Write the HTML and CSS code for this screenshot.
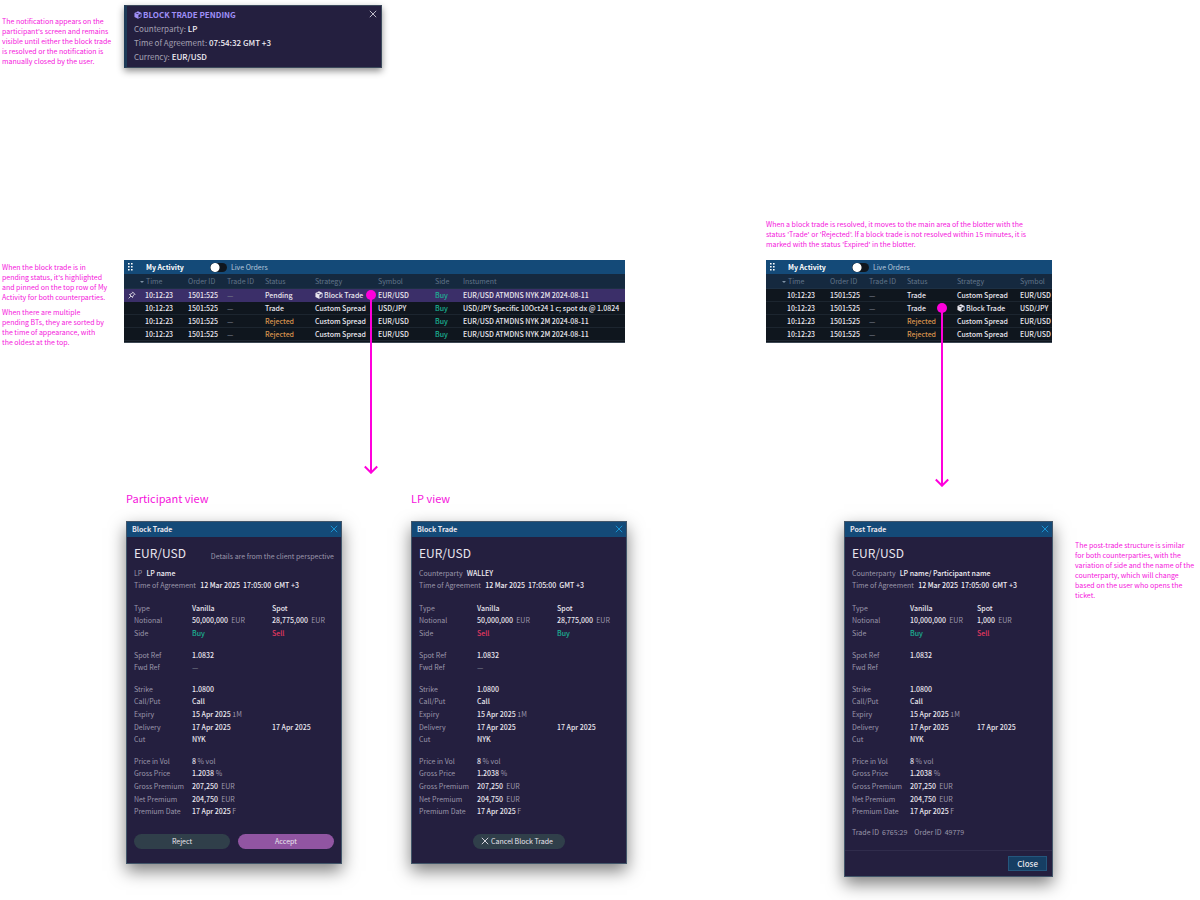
FILE: index.html
```html
<!DOCTYPE html>
<html lang="en">
<head>
<meta charset="utf-8">
<title>Block trade flow</title>
<link rel="stylesheet" href="styles.css">
</head>
<body>
<svg class="defs" aria-hidden="true">
  <symbol id="cube" viewBox="0 0 14 14"><path fill="currentColor" fill-rule="evenodd" d="M7 .4 13.2 3.3V10.5L7 13.7.8 10.5V3.3ZM7.8 6.9V11.8L11.8 9.7V5ZM2.6 3.6 7 5.7 8.6 5 4.2 2.9Z"/></symbol>
  <symbol id="cross" viewBox="0 0 10 10"><path d="M1 1 9 9M9 1 1 9" fill="none" stroke="currentColor" stroke-width="1.1"/></symbol>
  <symbol id="grip" viewBox="0 0 5 8"><path fill="currentColor" d="M0 0h1.6v1.6H0zM3 0h1.6v1.6H3zM0 3h1.6v1.6H0zM3 3h1.6v1.6H3zM0 6h1.6v1.6H0zM3 6h1.6v1.6H3z"/></symbol>
  <symbol id="pin" viewBox="0 0 12 12"><path d="M6.6 1.2 10.8 5.4M7.3 1.9 4.8 4.6 2.2 5.2 6.8 9.8 7.4 7.2 10.1 4.7M4.4 7.6 1 11" fill="none" stroke="currentColor" stroke-width="1.3"/></symbol>
  <symbol id="arrow" viewBox="0 0 14 184"><circle cx="7" cy="5" r="5" fill="currentColor"/><path d="M7 5V182M.8 176.5 7 182.7 13.2 176.5" fill="none" stroke="currentColor" stroke-width="2"/></symbol>
</svg>
<main class="board">
  <p class="note note-alert">The notification appears on the<br>participant's screen and remains<br>visible until either the block trade<br>is resolved or the notification is<br>manually closed by the user.</p>
  <section class="alert">
    <div>
      <h2 class="alert-title"><svg class="icon"><use href="#cube"/></svg>BLOCK TRADE PENDING</h2>
      <p>Counterparty: <b>LP</b></p>
      <p>Time of Agreement: <b>07:54:32 GMT +3</b></p>
      <p>Currency: <b>EUR/USD</b></p>
    </div>
    <button class="close" aria-label="Close notification"><svg class="icon-cross"><use href="#cross"/></svg></button>
  </section>

  <div class="note note-pending">
    <p>When the block trade is in<br>pending status, it's highlighted<br>and pinned on the top row of My<br>Activity for both counterparties.</p>
    <p>When there are multiple<br>pending BTs, they are sorted by<br>the time of appearance, with<br>the oldest at the top.</p>
  </div>

  <section class="activity activity-wide">
    <header class="activity-bar">
      <svg class="grip"><use href="#grip"/></svg>
      <h2>My Activity</h2>
      <label class="switch"><input type="checkbox">Live Orders</label>
    </header>
    <table class="blotter">
      <colgroup><col class="c-pin"><col class="c-time"><col class="c-order"><col class="c-trade"><col class="c-status"><col class="c-strategy"><col class="c-symbol"><col class="c-side"><col></colgroup>
      <thead><tr><th></th><th><i class="sort"></i>Time</th><th>Order ID</th><th>Trade ID</th><th>Status</th><th>Strategy</th><th>Symbol</th><th>Side</th><th>Instument</th></tr></thead>
      <tbody>
        <tr class="pinned"><td><svg class="pin"><use href="#pin"/></svg></td><td>10:12:23</td><td>1501:525</td><td class="dim">—</td><td>Pending</td><td class="anchor"><svg class="icon"><use href="#cube"/></svg>Block Trade<svg class="connector on-strategy"><use href="#arrow"/></svg></td><td>EUR/USD</td><td class="buy">Buy</td><td class="clip">EUR/USD ATMDNS NYK 2M 2024-08-11</td></tr>
        <tr><td></td><td>10:12:23</td><td>1501:525</td><td class="dim">—</td><td>Trade</td><td>Custom Spread</td><td>USD/JPY</td><td class="buy">Buy</td><td class="clip">USD/JPY Specific 10Oct24 1 c; spot dx @ 1.0824</td></tr>
        <tr><td></td><td>10:12:23</td><td>1501:525</td><td class="dim">—</td><td class="rejected">Rejected</td><td>Custom Spread</td><td>EUR/USD</td><td class="buy">Buy</td><td class="clip">EUR/USD ATMDNS NYK 2M 2024-08-11</td></tr>
        <tr><td></td><td>10:12:23</td><td>1501:525</td><td class="dim">—</td><td class="rejected">Rejected</td><td>Custom Spread</td><td>EUR/USD</td><td class="buy">Buy</td><td class="clip">EUR/USD ATMDNS NYK 2M 2024-08-11</td></tr>
      </tbody>
    </table>
  </section>

  <div class="resolved">
    <p class="note">When a block trade is resolved, it moves to the main area of the blotter with the<br>status 'Trade' or 'Rejected'. If a block trade is not resolved within 15 minutes, it is<br>marked with the status 'Expired' in the blotter.</p>
    <section class="activity activity-narrow">
      <header class="activity-bar">
        <svg class="grip"><use href="#grip"/></svg>
        <h2>My Activity</h2>
        <label class="switch"><input type="checkbox">Live Orders</label>
      </header>
      <table class="blotter">
        <colgroup><col class="c-pin"><col class="c-time"><col class="c-order"><col class="c-trade"><col class="c-status"><col class="c-strategy"><col></colgroup>
        <thead><tr><th></th><th><i class="sort"></i>Time</th><th>Order ID</th><th>Trade ID</th><th>Status</th><th>Strategy</th><th>Symbol</th></tr></thead>
        <tbody>
          <tr><td></td><td>10:12:23</td><td>1501:525</td><td class="dim">—</td><td>Trade</td><td>Custom Spread</td><td class="clip">EUR/USD</td></tr>
          <tr><td></td><td>10:12:23</td><td>1501:525</td><td class="dim">—</td><td class="anchor">Trade<svg class="connector on-status"><use href="#arrow"/></svg></td><td><svg class="icon"><use href="#cube"/></svg>Block Trade</td><td class="clip">USD/JPY</td></tr>
          <tr><td></td><td>10:12:23</td><td>1501:525</td><td class="dim">—</td><td class="rejected">Rejected</td><td>Custom Spread</td><td class="clip">EUR/USD</td></tr>
          <tr><td></td><td>10:12:23</td><td>1501:525</td><td class="dim">—</td><td class="rejected">Rejected</td><td>Custom Spread</td><td class="clip">EUR/USD</td></tr>
        </tbody>
      </table>
    </section>
  </div>

  <div class="views">
    <section class="view">
      <h2 class="view-name">Participant view</h2>
      <article class="ticket">
        <header class="ticket-bar"><h3>Block Trade</h3><button class="close" aria-label="Close"><svg class="icon-cross"><use href="#cross"/></svg></button></header>
        <div class="ticket-body">
          <div class="pair-row"><h4>EUR/USD</h4><span>Details are from the client perspective</span></div>
          <p>LP &nbsp;<b>LP name</b></p>
          <p>Time of Agreement &nbsp;<b>12 Mar 2025 &nbsp;17:05:00 &nbsp;GMT +3</b></p>
          <div class="groups">
            <table class="fields rows-3">
              <tr><th>Type</th><td>Vanilla</td><td>Spot</td></tr>
              <tr><th>Notional</th><td>50,000,000 <i>&nbsp;EUR</i></td><td>28,775,000 <i>&nbsp;EUR</i></td></tr>
              <tr><th>Side</th><td class="buy">Buy</td><td class="sell">Sell</td></tr>
            </table>
            <table class="fields rows-2">
              <tr><th>Spot Ref</th><td>1.0832</td><td></td></tr>
              <tr><th>Fwd Ref</th><td class="dim">—</td><td></td></tr>
            </table>
            <table class="fields rows-5">
              <tr><th>Strike</th><td>1.0800</td><td></td></tr>
              <tr><th>Call/Put</th><td>Call</td><td></td></tr>
              <tr><th>Expiry</th><td>15 Apr 2025 <i>1M</i></td><td></td></tr>
              <tr><th>Delivery</th><td>17 Apr 2025</td><td>17 Apr 2025</td></tr>
              <tr><th>Cut</th><td>NYK</td><td></td></tr>
            </table>
            <table class="fields rows-5">
              <tr><th>Price in Vol</th><td>8 <i>% vol</i></td><td></td></tr>
              <tr><th>Gross Price</th><td>1.2038 <i>%</i></td><td></td></tr>
              <tr><th>Gross Premium</th><td>207,250 <i>&nbsp;EUR</i></td><td></td></tr>
              <tr><th>Net Premium</th><td>204,750 <i>&nbsp;EUR</i></td><td></td></tr>
              <tr><th>Premium Date</th><td>17 Apr 2025 <i>F</i></td><td></td></tr>
            </table>
          </div>
          <div class="actions"><button class="pill wide">Reject</button><button class="pill wide accept">Accept</button></div>
        </div>
      </article>
    </section>

    <section class="view">
      <h2 class="view-name">LP view</h2>
      <article class="ticket">
        <header class="ticket-bar"><h3>Block Trade</h3><button class="close" aria-label="Close"><svg class="icon-cross"><use href="#cross"/></svg></button></header>
        <div class="ticket-body">
          <div class="pair-row"><h4>EUR/USD</h4></div>
          <p>Counterparty &nbsp;<b>WALLEY</b></p>
          <p>Time of Agreement &nbsp;<b>12 Mar 2025 &nbsp;17:05:00 &nbsp;GMT +3</b></p>
          <div class="groups">
            <table class="fields rows-3">
              <tr><th>Type</th><td>Vanilla</td><td>Spot</td></tr>
              <tr><th>Notional</th><td>50,000,000 <i>&nbsp;EUR</i></td><td>28,775,000 <i>&nbsp;EUR</i></td></tr>
              <tr><th>Side</th><td class="sell">Sell</td><td class="buy">Buy</td></tr>
            </table>
            <table class="fields rows-2">
              <tr><th>Spot Ref</th><td>1.0832</td><td></td></tr>
              <tr><th>Fwd Ref</th><td class="dim">—</td><td></td></tr>
            </table>
            <table class="fields rows-5">
              <tr><th>Strike</th><td>1.0800</td><td></td></tr>
              <tr><th>Call/Put</th><td>Call</td><td></td></tr>
              <tr><th>Expiry</th><td>15 Apr 2025 <i>1M</i></td><td></td></tr>
              <tr><th>Delivery</th><td>17 Apr 2025</td><td>17 Apr 2025</td></tr>
              <tr><th>Cut</th><td>NYK</td><td></td></tr>
            </table>
            <table class="fields rows-5">
              <tr><th>Price in Vol</th><td>8 <i>% vol</i></td><td></td></tr>
              <tr><th>Gross Price</th><td>1.2038 <i>%</i></td><td></td></tr>
              <tr><th>Gross Premium</th><td>207,250 <i>&nbsp;EUR</i></td><td></td></tr>
              <tr><th>Net Premium</th><td>204,750 <i>&nbsp;EUR</i></td><td></td></tr>
              <tr><th>Premium Date</th><td>17 Apr 2025 <i>F</i></td><td></td></tr>
            </table>
          </div>
          <div class="actions"><button class="pill"><svg class="icon-cross"><use href="#cross"/></svg>Cancel Block Trade</button></div>
        </div>
      </article>
    </section>
  </div>

  <div class="post">
    <article class="ticket post-ticket">
      <header class="ticket-bar"><h3>Post Trade</h3><button class="close" aria-label="Close"><svg class="icon-cross"><use href="#cross"/></svg></button></header>
      <div class="ticket-body">
        <div class="pair-row"><h4>EUR/USD</h4></div>
        <p>Counterparty &nbsp;<b>LP name/ Participant name</b></p>
        <p>Time of Agreement &nbsp;<b>12 Mar 2025 &nbsp;17:05:00 &nbsp;GMT +3</b></p>
        <div class="groups">
          <table class="fields rows-3">
            <tr><th>Type</th><td>Vanilla</td><td>Spot</td></tr>
            <tr><th>Notional</th><td>10,000,000 <i>&nbsp;EUR</i></td><td>1,000 <i>&nbsp;EUR</i></td></tr>
            <tr><th>Side</th><td class="buy">Buy</td><td class="sell">Sell</td></tr>
          </table>
          <table class="fields rows-2">
            <tr><th>Spot Ref</th><td>1.0832</td><td></td></tr>
            <tr><th>Fwd Ref</th><td></td><td></td></tr>
          </table>
          <table class="fields rows-5">
            <tr><th>Strike</th><td>1.0800</td><td></td></tr>
            <tr><th>Call/Put</th><td>Call</td><td></td></tr>
            <tr><th>Expiry</th><td>15 Apr 2025 <i>1M</i></td><td></td></tr>
            <tr><th>Delivery</th><td>17 Apr 2025</td><td>17 Apr 2025</td></tr>
            <tr><th>Cut</th><td>NYK</td><td></td></tr>
          </table>
          <table class="fields rows-5">
            <tr><th>Price in Vol</th><td>8 <i>% vol</i></td><td></td></tr>
            <tr><th>Gross Price</th><td>1.2038 <i>%</i></td><td></td></tr>
            <tr><th>Gross Premium</th><td>207,250 <i>&nbsp;EUR</i></td><td></td></tr>
            <tr><th>Net Premium</th><td>204,750 <i>&nbsp;EUR</i></td><td></td></tr>
            <tr><th>Premium Date</th><td>17 Apr 2025 <i>F</i></td><td></td></tr>
          </table>
        </div>
        <p class="ids"><span>Trade ID &nbsp;6765:29</span><span>Order ID &nbsp;49779</span></p>
      </div>
      <footer class="ticket-foot"><button class="close-ticket">Close</button></footer>
    </article>
    <p class="note note-post">The post-trade structure is similar<br>for both counterparties, with the<br>variation of side and the name of the<br>counterparty, which will change<br>based on the user who opens the<br>ticket.</p>
  </div>
</main>
</body>
</html>
```

FILE: styles.css
```css
* { box-sizing: border-box; }
body { margin: 0; background: #fff; color: #e9e6ee; font: 500 7px/12px "Noto Sans CJK SC", "Noto Sans", sans-serif; }
h2, h3, h4, p { margin: 0; font-size: inherit; }
b { font-weight: 500; color: #f1eef4; }
i { font-style: normal; }
button { font: inherit; color: inherit; padding: 0; border: 0; background: none; }
svg { display: block; flex: none; }
.defs { display: none; }
.icon { display: inline-block; width: 8px; height: 8px; margin-right: 1px; vertical-align: -1px; }
.icon-cross { width: 8px; height: 8px; }
.close { display: flex; color: #199ddf; }

.board { display: grid; grid-template-columns: 122px minmax(0, 642fr) minmax(0, 434fr); grid-template-rows: 214px auto auto; padding: 5px 0 24px 2px; }
.note { color: #f514dc; font-weight: 400; line-height: 10px; white-space: nowrap; }
.note-alert { padding-top: 11px; }

.alert { grid-column: 2 / 4; justify-self: start; align-self: start; width: 258px; display: flex; justify-content: space-between; padding: 2px 4px 3px 7px; background: #241f3f; border: 1px solid #3c4a5c; border-left: 3px solid #1d3b58; box-shadow: 0 3px 7px rgba(0, 0, 0, .45); font-size: 8px; line-height: 14px; color: #a5a1b3; font-weight: 400; }
.alert-title { color: #9f8ff8; font-weight: 700; }
.alert .close { align-self: start; padding-top: 2px; color: #d5d2dc; }

.note-pending { grid-column: 1; align-self: end; display: grid; gap: 5px; }
.activity { background: #0f161e; border-bottom: 1px solid #3d4854; padding-bottom: 1px; align-self: end; }
.activity-wide { width: 78%; margin-bottom: 4px; }
.activity-narrow { width: 66%; }
.resolved { display: grid; gap: 11px; align-self: end; padding-bottom: 4px; }
.activity-bar { display: flex; align-items: center; height: 14px; background: #144a78; padding-left: 4px; color: #fff; }
.activity-bar h2 { margin: 0 26px 0 13px; font-weight: 700; }
.grip { width: 5px; height: 8px; }
.switch { display: flex; align-items: center; gap: 4px; color: #b5c6d8; font-weight: 400; }
.switch input { appearance: none; margin: 0; width: 17px; height: 9px; border-radius: 5px; background: radial-gradient(circle at 5px 50%, #fff 4px, #0f161e 5px); }

.blotter { width: 100%; table-layout: fixed; border-collapse: collapse; }
.blotter th, .blotter td { padding: 0; height: 13px; line-height: 12px; text-align: left; white-space: nowrap; border-bottom: 1px solid #1c252f; }
.blotter th { height: 14px; font-weight: 400; background: #15293f; color: #61758a; border-color: #1d3044; }
.blotter .pinned td { background: #3b2f69; border-color: #3b2f69; }
.blotter .dim, .fields .dim { color: #777b88; }
.blotter .rejected { color: #d6914d; }
.buy, .fields .buy { color: #1bb394; }
.fields .sell { color: #e0385f; }
.clip { overflow: hidden; }
.c-pin { width: 21px; }
.c-time { width: 43px; }
.c-order { width: 39px; }
.c-trade { width: 38px; }
.c-status { width: 50px; }
.c-strategy { width: 63px; }
.c-symbol { width: 57px; }
.c-side { width: 28px; }
.sort { display: inline-block; margin: 0 2px 1px -5px; border: solid transparent; border-width: 2px 2px 0 2px; border-top-color: #7f92a5; }
.pin { width: 8px; height: 8px; margin-left: 4px; }
.anchor { position: relative; }
.connector { position: absolute; z-index: 1; top: 1px; width: 14px; height: 184px; color: #ff00dc; }
.on-strategy { left: 49px; }
.on-status { left: 28px; }

.views { grid-column: 2; display: flex; gap: 69px; padding: 141px 0 0 2px; }
.view-name { height: 33px; color: #f514dc; font-size: 11px; line-height: 20px; font-weight: 400; }
.ticket { width: 216px; background: #241f3f; border: 1px solid #42566a; box-shadow: 0 7px 16px rgba(0, 0, 0, .5); }
.ticket-bar { display: flex; align-items: center; justify-content: space-between; height: 15px; padding: 0 3px 0 5px; background: #144a78; }
.ticket-bar h3 { font-weight: 700; }
.ticket-body { padding: 7px 7px 14px; color: #9b97ab; font-weight: 400; }
.ticket-body b { margin-left: 1px; }
.pair-row { display: flex; align-items: center; justify-content: space-between; margin-bottom: 5px; }
.pair-row h4 { color: #e9e6ee; font-size: 12px; line-height: 18px; font-weight: 400; }
.pair-row span { padding-top: 6px; }
.groups { display: grid; gap: 9px; margin-top: 11px; }
.fields { width: 100%; table-layout: fixed; border-collapse: collapse; line-height: 12px; }
.rows-3 { height: 38px; }
.rows-2 { height: 25px; }
.rows-5 { height: 63px; }
.fields th, .fields td { padding: 0; text-align: left; font-weight: 400; white-space: nowrap; }
.fields th { width: 58px; }
.fields td { color: #e9e6ee; font-weight: 500; }
.fields td:nth-child(2) { width: 80px; }
.fields i { color: #9b97ab; font-weight: 400; }
.actions { display: flex; justify-content: center; gap: 8px; margin-top: 16px; }
.pill { display: flex; align-items: center; justify-content: center; gap: 2px; height: 15px; padding: 0 12px 0 8px; border-radius: 8px; background: #303f4a; color: #e9e6ee; }
.wide { flex: 1; padding: 0; }
.accept { background: #9155a2; }

.post { display: flex; align-items: flex-start; gap: 22px; padding: 174px 0 0 78px; }
.post-ticket { flex: none; width: 209px; }
.post-ticket .ticket-body { padding-bottom: 12px; }
.post-ticket .fields td:nth-child(2) { width: 67px; }
.ids { display: flex; gap: 7px; margin-top: 8px; }
.ticket-foot { display: flex; justify-content: flex-end; padding: 5px; border-top: 1px solid #302c4c; }
.close-ticket { padding: 0 8px; height: 15px; font-size: 8px; line-height: 13px; background: #163e63; border: 1px solid #24567d; }
.note-post { padding-top: 19px; }
```
